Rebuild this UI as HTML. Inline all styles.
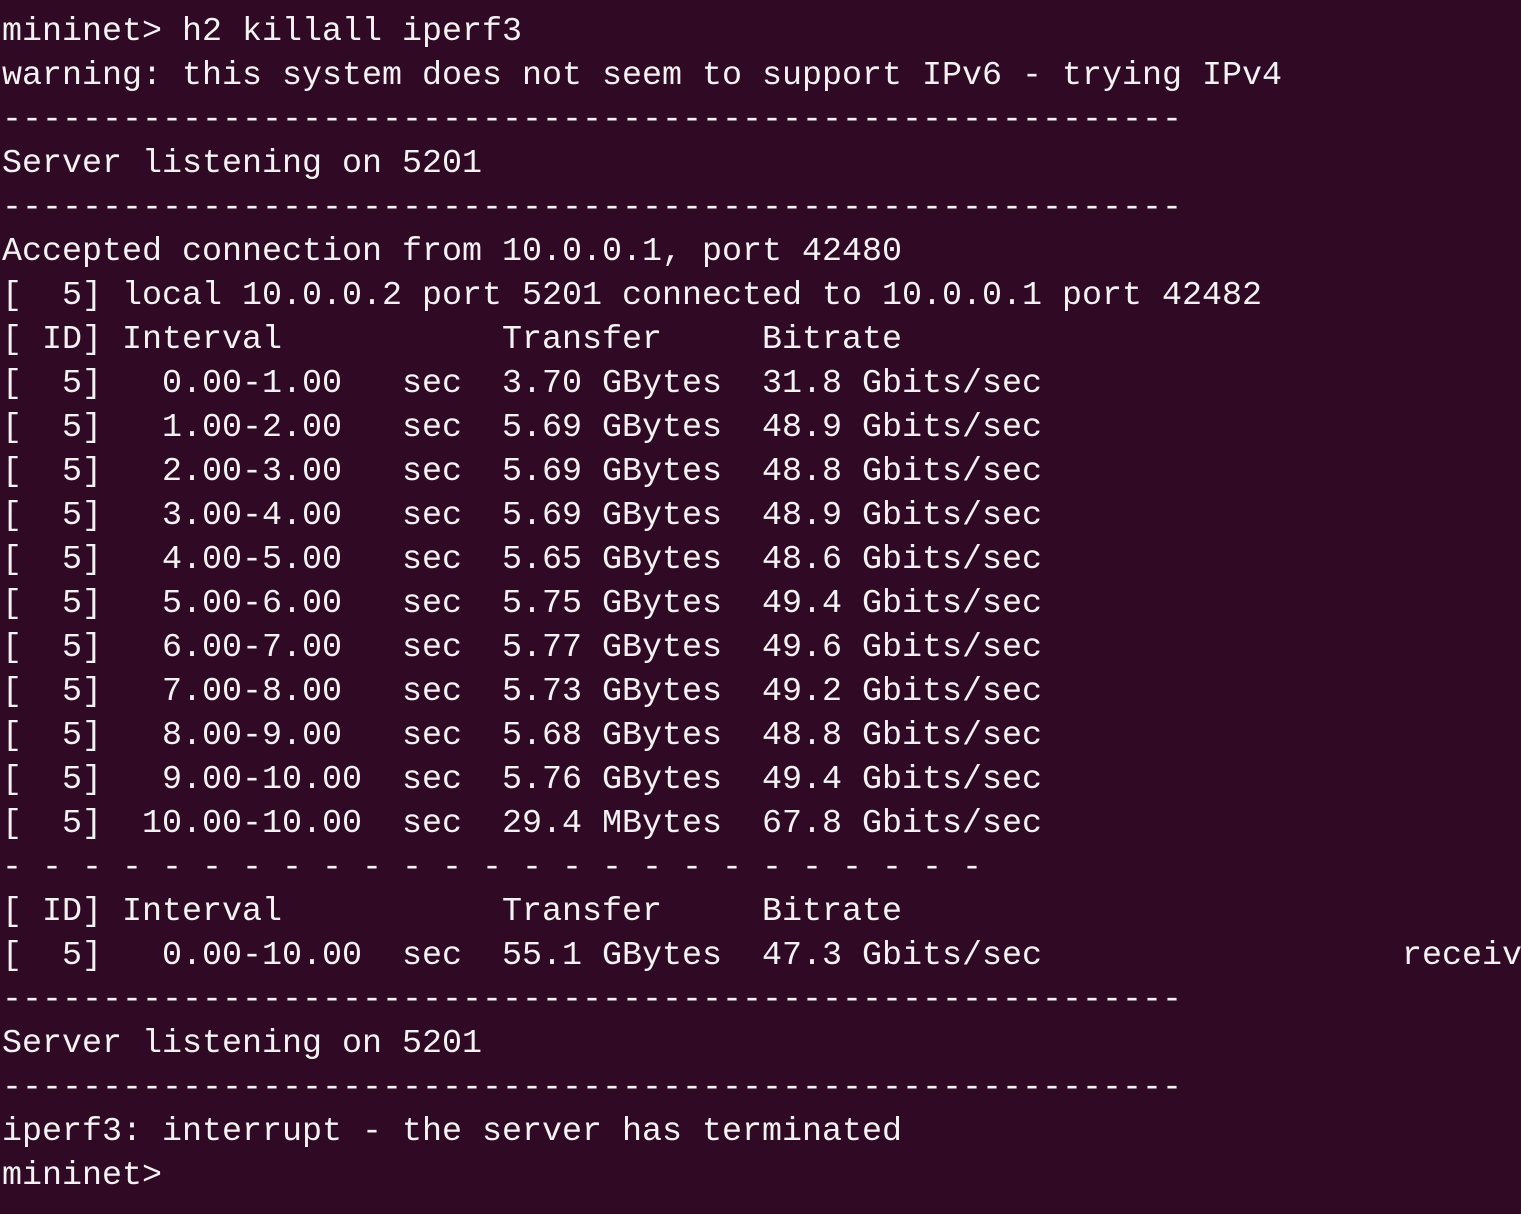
<!DOCTYPE html>
<html><head><meta charset="utf-8"><style>
html,body{margin:0;padding:0;background:#300a24;width:1521px;height:1214px;overflow:hidden}
pre{margin:0;padding:10px 0 0 2px;font-family:"Liberation Mono",monospace;font-size:33.33px;line-height:44px;color:#f2f2f2;white-space:pre}
</style></head><body><pre>mininet&gt; h2 killall iperf3
warning: this system does not seem to support IPv6 - trying IPv4
-----------------------------------------------------------
Server listening on 5201
-----------------------------------------------------------
Accepted connection from 10.0.0.1, port 42480
[  5] local 10.0.0.2 port 5201 connected to 10.0.0.1 port 42482
[ ID] Interval           Transfer     Bitrate
[  5]   0.00-1.00   sec  3.70 GBytes  31.8 Gbits/sec
[  5]   1.00-2.00   sec  5.69 GBytes  48.9 Gbits/sec
[  5]   2.00-3.00   sec  5.69 GBytes  48.8 Gbits/sec
[  5]   3.00-4.00   sec  5.69 GBytes  48.9 Gbits/sec
[  5]   4.00-5.00   sec  5.65 GBytes  48.6 Gbits/sec
[  5]   5.00-6.00   sec  5.75 GBytes  49.4 Gbits/sec
[  5]   6.00-7.00   sec  5.77 GBytes  49.6 Gbits/sec
[  5]   7.00-8.00   sec  5.73 GBytes  49.2 Gbits/sec
[  5]   8.00-9.00   sec  5.68 GBytes  48.8 Gbits/sec
[  5]   9.00-10.00  sec  5.76 GBytes  49.4 Gbits/sec
[  5]  10.00-10.00  sec  29.4 MBytes  67.8 Gbits/sec
- - - - - - - - - - - - - - - - - - - - - - - - -
[ ID] Interval           Transfer     Bitrate
[  5]   0.00-10.00  sec  55.1 GBytes  47.3 Gbits/sec                  receiver
-----------------------------------------------------------
Server listening on 5201
-----------------------------------------------------------
iperf3: interrupt - the server has terminated
mininet&gt; </pre></body></html>
